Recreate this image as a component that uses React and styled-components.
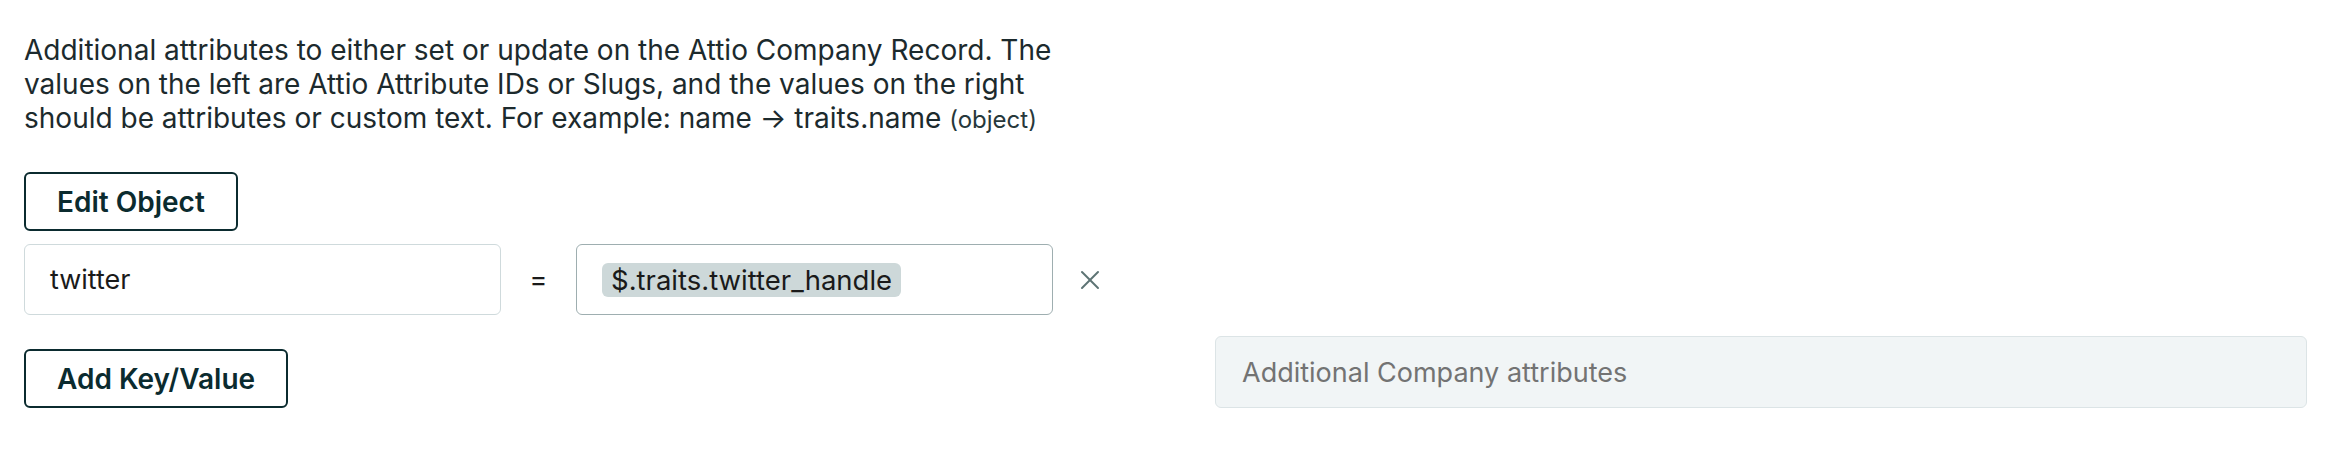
import React from "react";
import styled, { createGlobalStyle } from "styled-components";
import { X } from "lucide-react";

const GlobalStyle = createGlobalStyle`
  html, body {
    margin: 0;
    padding: 0;
    background: #fff;
  }
  body {
    font-family: Inter, "Noto Sans", sans-serif;
    -webkit-font-smoothing: antialiased;
  }
`;

const Page = styled.div`
  display: flex;
  flex-direction: column;
  padding: 33px 27px 0 24px;
`;

const Description = styled.p`
  margin: 0 0 37px;
  max-width: 1060px;
  font-size: 28px;
  line-height: 34px;
  color: #1c2a2d;

  small {
    font-size: 24px;
    line-height: 1;
    color: #27383b;
  }
`;

const OutlineButton = styled.button`
  display: inline-flex;
  align-items: center;
  justify-content: center;
  align-self: ${(p) => p.$align || "flex-start"};
  height: 59px;
  padding: 0 31px;
  background: #fff;
  border: 2px solid #0b2b2f;
  border-radius: 6px;
  font-family: Inter, sans-serif;
  font-size: 28px;
  font-weight: 600;
  color: #0b2b2f;
  cursor: pointer;
`;

const MappingRow = styled.div`
  display: flex;
  align-items: center;
  margin-top: 13px;
`;

const Field = styled.div`
  display: flex;
  align-items: center;
  box-sizing: border-box;
  width: 477px;
  height: 71px;
  padding: 0 25px;
  border: 1.5px solid ${(p) => (p.$strong ? "#9eaeb0" : "#cfdadc")};
  border-radius: 6px;
  font-size: 27px;
  color: #1a1a1a;
  background: #fff;
`;

const Equals = styled.span`
  width: 75px;
  text-align: center;
  font-size: 27px;
  color: #1a1a1a;
`;

const Chip = styled.span`
  display: inline-flex;
  align-items: center;
  height: 34px;
  padding: 0 9px;
  border-radius: 6px;
  background: #cdd8d9;
  font-size: 27.5px;
  color: #1a1a1a;
`;

const RemoveButton = styled.button`
  display: flex;
  align-items: center;
  justify-content: center;
  margin-left: 21px;
  padding: 0;
  border: none;
  background: transparent;
  color: #5d7374;
  cursor: pointer;
`;

const FooterRow = styled.div`
  display: flex;
  align-items: flex-end;
  justify-content: space-between;
  margin-top: 21px;
`;

const AttributesBox = styled.div`
  display: flex;
  align-items: center;
  box-sizing: border-box;
  width: 1092px;
  height: 72px;
  padding: 0 26px;
  background: #f1f5f6;
  border: 1.5px solid #dce4e6;
  border-radius: 6px;
  font-size: 27px;
  color: #737373;
`;

const App = () => {
  return (
    <Page>
      <GlobalStyle />
      <Description>
        Additional attributes to either set or update on the Attio Company
        Record. The values on the left are Attio Attribute IDs or Slugs, and
        the values on the right should be attributes or custom text. For
        example: name → traits.name <small>(object)</small>
      </Description>
      <OutlineButton>Edit Object</OutlineButton>
      <MappingRow>
        <Field>twitter</Field>
        <Equals>=</Equals>
        <Field $strong>
          <Chip>$.traits.twitter_handle</Chip>
        </Field>
        <RemoveButton aria-label="remove">
          <X size={32} strokeWidth={1.5} />
        </RemoveButton>
      </MappingRow>
      <FooterRow>
        <OutlineButton $align="flex-end">Add Key/Value</OutlineButton>
        <AttributesBox>Additional Company attributes</AttributesBox>
      </FooterRow>
    </Page>
  );
};

export default App;
